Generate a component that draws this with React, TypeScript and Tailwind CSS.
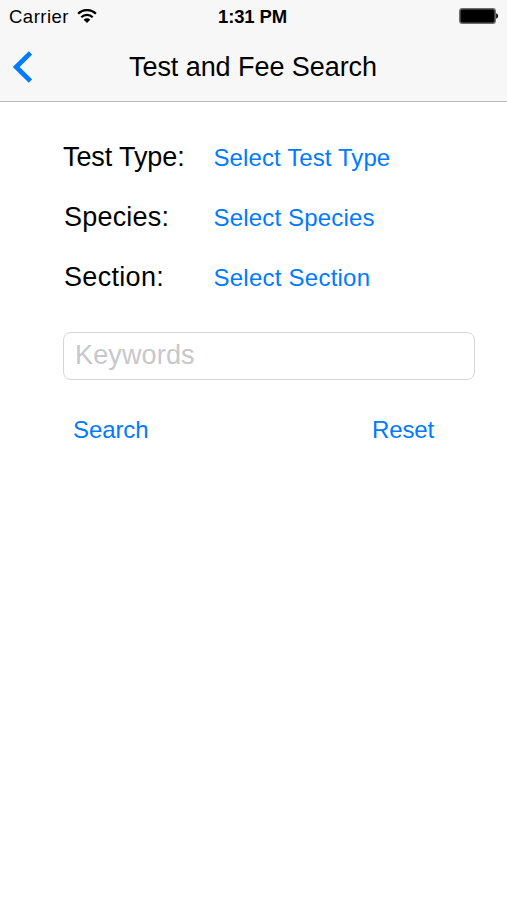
import React from 'react';

interface PickerRow {
    label: string;
    labelClass: string;
    action: string;
    actionClass: string;
}

const rows: PickerRow[] = [
    { label: 'Test Type:', labelClass: 'tracking-[-0.1px]', action: 'Select Test Type', actionClass: 'tracking-[0.1px]' },
    { label: 'Species:', labelClass: 'pl-px tracking-[0.2px]', action: 'Select Species', actionClass: 'tracking-[0.17px]' },
    { label: 'Section:', labelClass: 'pl-px tracking-[0.32px]', action: 'Select Section', actionClass: 'tracking-[0.24px]' },
];

const WifiIcon = () => (
    <svg className="w-5 h-[14px]" viewBox="0 0 20 14" fill="none" stroke="#000" strokeWidth="2.3">
        <path d="M1.1 4.8a12.6 12.6 0 0 1 17.8 0" />
        <path d="M4.3 8.2a8.1 8.1 0 0 1 11.4 0" />
        <path d="M10 14 6.7 10.7a4.7 4.7 0 0 1 6.6 0Z" fill="#000" stroke="none" />
    </svg>
);

const BatteryIcon = () => (
    <svg className="w-10 h-4" viewBox="0 0 40 16">
        <rect x="0.8" y="0.8" width="35.4" height="14.4" rx="2.5" fill="#000" stroke="#6b6b6b" strokeWidth="1.5" />
        <path d="M37.2 5.3c2.5 0.6 2.5 4.8 0 5.4Z" />
    </svg>
);

const StatusBar = () => (
    <div className="grid h-8 grid-cols-3 items-center pl-[9px] pr-2 text-[18.5px]">
        <div className="flex items-center gap-2">
            <span className="pt-px tracking-[0.5px]">Carrier</span>
            <WifiIcon />
        </div>
        <span className="pt-px pr-[3px] text-center font-bold tracking-[-0.15px]">1:31 PM</span>
        <div className="flex justify-end">
            <BatteryIcon />
        </div>
    </div>
);

const NavBar = () => (
    <div className="grid h-[69px] grid-cols-[60px_1fr_60px] items-center">
        <button aria-label="Back" className="pl-3">
            <svg className="w-5 h-8" viewBox="0 0 20 32" fill="none" stroke="#007aff" strokeWidth="4.8">
                <path d="M18.5 1.9 4.2 16 18.5 30.1" />
            </svg>
        </button>
        <h1 className="pt-0.5 pr-px text-center text-[27px] whitespace-nowrap tracking-[-0.06px]">Test and Fee Search</h1>
    </div>
);

const App: React.FC = () => {
    return (
        <div className="min-h-screen bg-white font-['Liberation_Sans',sans-serif] text-black">
            <header className="border-b border-[#b9b9b9] bg-[#f7f7f7]">
                <StatusBar />
                <NavBar />
            </header>
            <main className="pl-[63px] pr-8 pt-[25px]">
                {rows.map((row) => (
                    <div key={row.label} className="flex h-[60px] items-center">
                        <span className={`w-[150.5px] pt-px text-[27px] ${row.labelClass}`}>{row.label}</span>
                        <button className={`pt-px text-2xl text-[#007aff] ${row.actionClass}`}>{row.action}</button>
                    </div>
                ))}
                <input
                    placeholder="Keywords"
                    className="mt-[25px] block h-12 w-full rounded-lg border border-[#d6d6d6] px-[11px] pb-px text-[27px] tracking-[0.15px] placeholder:text-[#c7c7cd]"
                />
                <div className="mt-[34px] flex justify-between pl-[10px] pr-[41px] text-2xl text-[#007aff]">
                    <button className="tracking-[-0.1px]">Search</button>
                    <button className="tracking-[-0.15px]">Reset</button>
                </div>
            </main>
        </div>
    );
};

export default App;
